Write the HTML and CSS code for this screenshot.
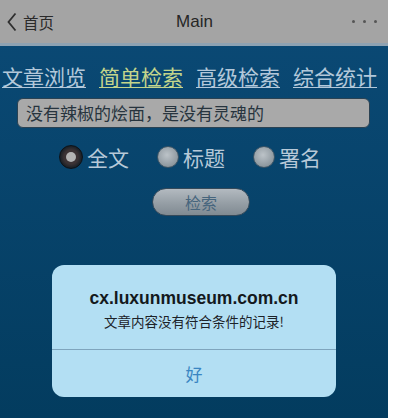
FILE: index.html
```html
<!DOCTYPE html>
<html lang="zh-CN">
<head>
<meta charset="utf-8">
<title>Main</title>
<link rel="stylesheet" href="styles.css">
</head>
<body>
<div class="screen">
  <header class="nav">
    <div class="nav-back">
      <svg class="chev" width="10" height="20" viewBox="0 0 10 20"><polyline points="8.5,1.5 1.5,10 8.5,18.5" fill="none" stroke="#2f2f2f" stroke-width="1.8"/></svg>
      <span>首页</span>
    </div>
    <div class="nav-title">Main</div>
    <div class="nav-more"><i></i><i></i><i></i></div>
  </header>
  <main class="content">
    <nav class="tabs">
      <a class="tab">文章浏览</a>
      <a class="tab active">简单检索</a>
      <a class="tab">高级检索</a>
      <a class="tab">综合统计</a>
    </nav>
    <div class="search-input">没有辣椒的烩面，是没有灵魂的</div>
    <div class="radios">
      <label class="radio-item"><span class="radio checked"><span class="dot"></span></span><span class="radio-label">全文</span></label>
      <label class="radio-item"><span class="radio"></span><span class="radio-label">标题</span></label>
      <label class="radio-item"><span class="radio"></span><span class="radio-label">署名</span></label>
    </div>
    <div class="btn-row"><span class="btn">检索</span></div>
  </main>
  <div class="alert">
    <div class="alert-body">
      <div class="alert-title">cx.luxunmuseum.com.cn</div>
      <div class="alert-msg">文章内容没有符合条件的记录!</div>
    </div>
    <div class="alert-action">好</div>
  </div>
</div>
</body>
</html>
```
FILE: styles.css
```css
html, body {
  margin: 0;
  padding: 0;
  background: #ffffff;
}
body {
  font-family: "Noto Sans CJK SC", "Noto Sans", sans-serif;
  width: 396px;
  height: 418px;
  overflow: hidden;
}
.screen {
  position: relative;
  width: 388px;
  height: 418px;
  display: flex;
  flex-direction: column;
  background: linear-gradient(#0b4a76, #033c5f);
}
.nav {
  height: 43px;
  flex: none;
  background: #a4a4a4;
  border-bottom: 3px solid #8ea2b2;
  display: flex;
  align-items: center;
  position: relative;
}
.nav-back {
  display: flex;
  align-items: center;
  padding-left: 7px;
  gap: 6px;
  color: #2a2a2a;
  font-size: 15.5px;
  width: 100px;
}
.chev { display: block; }
.nav-title {
  flex: 1;
  text-align: center;
  font-family: "Liberation Sans", "Noto Sans", sans-serif;
  font-size: 17px;
  font-weight: 500;
  color: #262626;
  padding-right: 6px;
}
.nav-more {
  width: 100px;
  display: flex;
  justify-content: flex-end;
  gap: 8px;
  padding-right: 11px;
  box-sizing: border-box;
}
.nav-more i {
  width: 3px;
  height: 3px;
  border-radius: 50%;
  background: #555555;
}
.content {
  flex: 1;
  display: flex;
  flex-direction: column;
}
.tabs {
  display: flex;
  gap: 13px;
  padding: 16px 0 0 2px;
}
.tab {
  font-size: 21px;
  line-height: 28px;
  color: #b3c8da;
  text-decoration: underline;
  text-decoration-thickness: 1px;
  text-underline-offset: 2px;
}
.tab.active {
  color: #c3d58b;
}
.search-input {
  margin: 8px 18px 0 17px;
  height: 30px;
  box-sizing: border-box;
  background: #a9a9a9;
  border: 1.5px solid #2a4253;
  border-radius: 6px;
  padding-left: 8px;
  font-size: 17px;
  line-height: 27px;
  color: #27343e;
}
.radios {
  display: flex;
  gap: 28px;
  padding-left: 60px;
  margin-top: 16px;
  height: 26px;
  align-items: center;
}
.radio-item {
  display: flex;
  align-items: center;
  gap: 4px;
}
.radio {
  width: 22px;
  height: 22px;
  box-sizing: border-box;
  border-radius: 50%;
  background: radial-gradient(circle at 45% 40%, #bcc3c8, #8e989f 70%, #6f7a82);
  border: 1px solid #3d5566;
  display: flex;
  align-items: center;
  justify-content: center;
}
.radio.checked {
  width: 24px;
  height: 24px;
  margin-left: -1px;
  background: radial-gradient(circle, #3b3234 45%, #1a2026 70%, #121820);
  border: 1.5px solid #0d1218;
}
.radio .dot {
  width: 10px;
  height: 10px;
  border-radius: 50%;
  background: #b3b3b3;
}
.radio-label {
  font-size: 21px;
  line-height: 26px;
  color: #b7c9d8;
}
.btn-row {
  display: flex;
  padding-left: 152px;
  margin-top: 18px;
}
.btn {
  width: 98px;
  height: 28px;
  box-sizing: border-box;
  border-radius: 14px;
  background: linear-gradient(#b3bac0, #959ea5 55%, #808a92);
  border: 1px solid #34495a;
  color: #46657d;
  font-size: 16px;
  line-height: 26px;
  text-align: center;
}
.alert {
  position: absolute;
  left: 52px;
  top: 265px;
  width: 284px;
  height: 132px;
  border-radius: 12px;
  background: #b3dff3;
  display: flex;
  flex-direction: column;
  overflow: hidden;
}
.alert-body {
  height: 85px;
  box-sizing: border-box;
  border-bottom: 1px solid #7fa5bd;
  padding-top: 22px;
  text-align: center;
}
.alert-title {
  font-family: "Liberation Sans", "Noto Sans", sans-serif;
  font-weight: 700;
  font-size: 17.5px;
  line-height: 22px;
  color: #14191d;
}
.alert-msg {
  margin-top: 2px;
  font-size: 13.5px;
  line-height: 20px;
  color: #1c2228;
}
.alert-action {
  flex: 1;
  display: flex;
  align-items: center;
  justify-content: center;
  font-size: 17px;
  color: #3a86c2;
  padding-bottom: 1px;
}
```
